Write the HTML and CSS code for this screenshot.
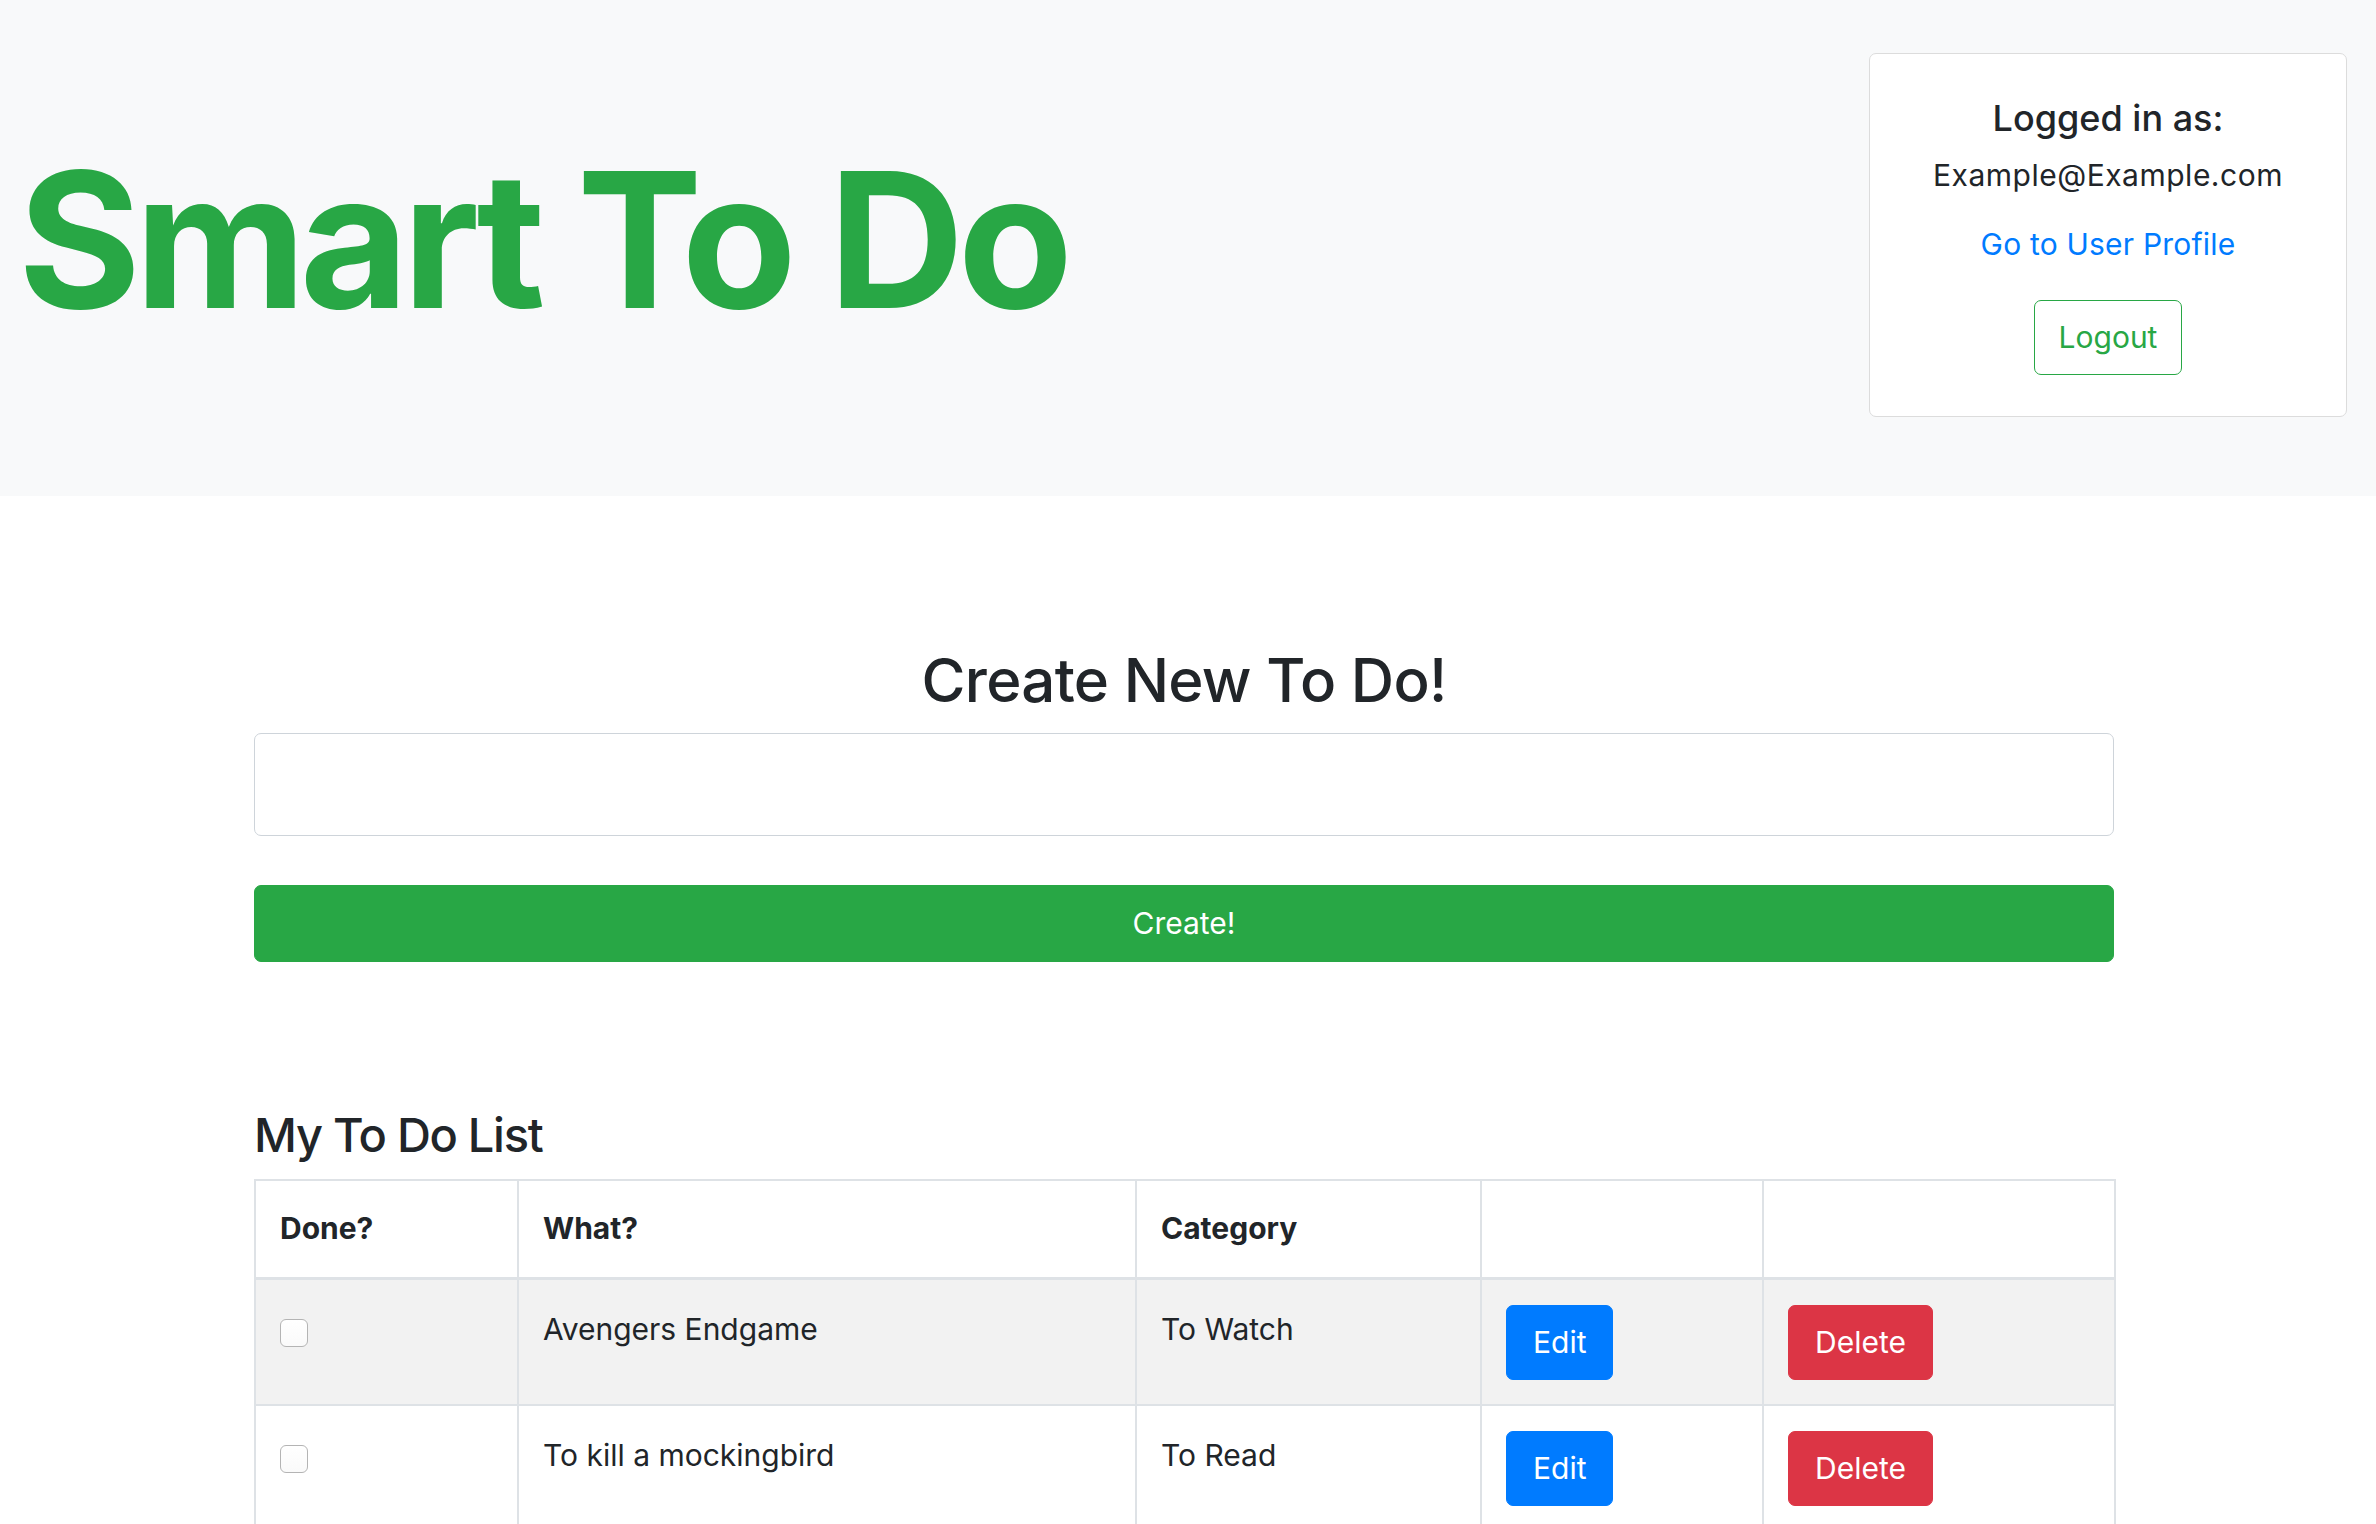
FILE: index.html
```html
<!DOCTYPE html>
<html lang="en">
<head>
<meta charset="utf-8">
<title>Smart To Do</title>
<link rel="stylesheet" href="styles.css">
</head>
<body>
<header class="top">
  <h1 class="brand">Smart To Do</h1>
  <div class="user-card">
    <h4 class="user-title">Logged in as:</h4>
    <p class="user-email">Example@Example.com</p>
    <a class="user-link" href="#">Go to User Profile</a>
    <button class="btn btn-outline-success">Logout</button>
  </div>
</header>
<main class="content">
  <h2 class="create-title">Create New To Do!</h2>
  <input class="todo-input" type="text">
  <button class="btn btn-success btn-block">Create!</button>
  <h3 class="list-title">My To Do List</h3>
  <table class="todo-table">
    <thead>
      <tr>
        <th class="c-done">Done?</th>
        <th class="c-what">What?</th>
        <th class="c-cat">Category</th>
        <th class="c-edit"></th>
        <th class="c-del"></th>
      </tr>
    </thead>
    <tbody>
      <tr class="odd">
        <td><input class="check" type="checkbox"></td>
        <td class="txt">Avengers Endgame</td>
        <td class="txt">To Watch</td>
        <td><button class="btn btn-primary">Edit</button></td>
        <td><button class="btn btn-danger">Delete</button></td>
      </tr>
      <tr>
        <td><input class="check" type="checkbox"></td>
        <td class="txt">To kill a mockingbird</td>
        <td class="txt">To Read</td>
        <td><button class="btn btn-primary">Edit</button></td>
        <td><button class="btn btn-danger">Delete</button></td>
      </tr>
    </tbody>
  </table>
</main>
</body>
</html>
```
FILE: styles.css
```css
html, body {
  margin: 0;
  padding: 0;
  background: #fff;
}
body {
  font-family: Inter, "Noto Sans", "Liberation Sans", sans-serif;
  font-size: 30px;
  line-height: 1.5;
  color: #212529;
}
.top {
  height: 496px;
  box-sizing: border-box;
  background: #f8f9fa;
  display: flex;
  justify-content: space-between;
  align-items: flex-start;
  padding: 0 29px 0 18px;
}
.brand {
  margin: 127px 0 0 0;
  font-size: 188px;
  line-height: 1.2;
  font-weight: 700;
  color: #28a745;
  letter-spacing: -6.4px;
}
.user-card {
  margin-top: 53px;
  width: 478px;
  height: 364px;
  box-sizing: border-box;
  background: #fff;
  border: 1.5px solid #dcdcdc;
  border-radius: 7px;
  display: flex;
  flex-direction: column;
  align-items: center;
  padding-top: 43px;
}
.user-title {
  margin: 0;
  font-size: 36px;
  line-height: 1.2;
  font-weight: 500;
}
.user-email {
  margin: 13px 0 0 0;
  font-size: 30px;
  letter-spacing: 0.5px;
}
.user-link {
  margin-top: 24px;
  color: #007bff;
  text-decoration: none;
  letter-spacing: 0.2px;
}
.btn {
  font-family: inherit;
  font-size: 30px;
  line-height: 1.5;
  padding: 14px 26px;
  border: 1.5px solid transparent;
  border-radius: 7px;
  background: none;
  color: #fff;
  cursor: pointer;
}
.btn-outline-success {
  margin-top: 33px;
  color: #28a745;
  border-color: #28a745;
  background: transparent;
  padding: 14px 24px;
}
.btn-success {
  background: #28a745;
  border-color: #28a745;
}
.btn-primary {
  background: #007bff;
  border-color: #007bff;
}
.btn-danger {
  background: #dc3545;
  border-color: #dc3545;
}
.btn-block {
  display: block;
  width: 100%;
  margin-top: 49px;
  padding: 15px 25px;
}
.content {
  margin-left: 254px;
  width: 1860px;
  padding-top: 148px;
}
.create-title {
  margin: 0;
  text-align: center;
  font-size: 60px;
  line-height: 1.2;
  font-weight: 500;
  letter-spacing: -0.7px;
}
.todo-input {
  display: block;
  box-sizing: border-box;
  width: 100%;
  height: 103px;
  margin-top: 17px;
  border: 1.5px solid #ced4da;
  border-radius: 7px;
  background: #fff;
  font-family: inherit;
  font-size: 30px;
  padding: 0 18px;
}
.list-title {
  margin: 145px 0 0 0;
  font-size: 47px;
  line-height: 1.2;
  font-weight: 500;
  letter-spacing: -1.3px;
}
.todo-table {
  margin-top: 16px;
  width: 100%;
  border-collapse: collapse;
  table-layout: fixed;
}
.todo-table th,
.todo-table td {
  box-sizing: border-box;
  border: 2px solid #dee2e6;
  text-align: left;
  vertical-align: top;
  padding: 25px 24px 24px;
}
.todo-table th {
  font-weight: 700;
  padding: 25px 24px 26px;
}
.todo-table thead th {
  border-bottom: 3px solid #dee2e6;
}
.todo-table td.txt {
  padding-top: 27px;
}
.c-done { width: 263px; }
.c-what { width: 618px; }
.c-cat { width: 345px; }
.c-edit { width: 282px; }
.c-del { width: 352px; }
.odd td {
  background: #f2f2f2;
}
.check {
  -webkit-appearance: none;
  appearance: none;
  display: block;
  width: 28px;
  height: 28px;
  margin: 14px 0 0 0;
  box-sizing: border-box;
  border: 1.5px solid #b4b4b4;
  border-radius: 6px;
  background: linear-gradient(#ffffff, #fafafa);
}
```
